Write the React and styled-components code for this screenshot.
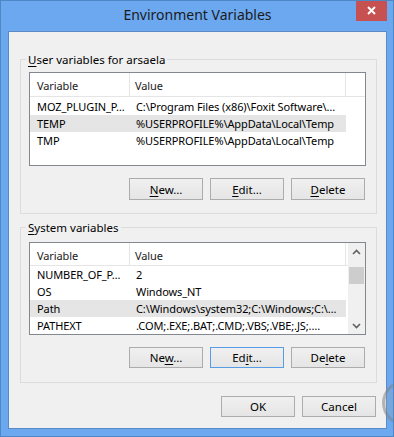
import React from "react";
import styled, { createGlobalStyle } from "styled-components";

const GlobalStyle = createGlobalStyle`
  html, body {
    margin: 0;
    padding: 0;
    background: #6ba8f0;
  }
  body {
    font-family: "Noto Sans", "Open Sans", sans-serif;
    font-size: 12px;
    color: #000;
  }
`;

const Window = styled.div`
  position: relative;
  box-sizing: border-box;
  width: 394px;
  height: 437px;
  display: flex;
  flex-direction: column;
  background: #6ba8f0;
  border: 1px solid #4f86c6;
  padding: 0 6px 7px 7px;
  overflow: hidden;
`;

const TitleBar = styled.div`
  height: 30px;
  display: grid;
  grid-template-columns: 1fr auto 1fr;
  align-items: start;
`;

const Title = styled.div`
  grid-column: 2;
  font-size: 14px;
  line-height: 28px;
  color: #1b1b1b;
  white-space: nowrap;
`;

const CloseButton = styled.div`
  grid-column: 3;
  justify-self: end;
  width: 31px;
  height: 21px;
  margin-top: -1px;
  background: #c75050;
  display: flex;
  align-items: center;
  justify-content: center;
`;

const Client = styled.div`
  flex: 1;
  display: flex;
  flex-direction: column;
  background: #f0f0f0;
  border: 1px solid #5a8bc6;
  padding: 20px 9px 0 11px;
`;

const Group = styled.fieldset`
  margin: ${({ $gap }) => $gap}px 0 0;
  padding: ${({ $top }) => $top}px 10px ${({ $bottom }) => $bottom}px 8px;
  border: 1px solid #dcdcdc;
  min-width: 0;
`;

const Legend = styled.legend`
  padding: 0 2px;
  margin-left: -3px;
  font-size: 11.5px;
  line-height: 15px;
`;

const Key = styled.span`
  text-decoration: underline;
  text-underline-offset: 2px;
`;

const ListView = styled.div`
  box-sizing: border-box;
  height: ${({ $height }) => $height}px;
  display: flex;
  background: #fff;
  border: 1px solid #828790;
  overflow: hidden;
  font-size: 11px;
  letter-spacing: -0.1px;
`;

const Columns = styled.div`
  flex: 1;
  min-width: 0;
  display: flex;
  flex-direction: column;
`;

const Header = styled.div`
  display: grid;
  grid-template-columns: 100px 216px 1fr;
  height: 23px;
  border-bottom: 1px solid #e5e5e5;
`;

const HeaderCell = styled.div`
  padding: 3px 0 0 ${({ $pad }) => $pad}px;
  line-height: 19px;
  color: #1a1a1a;
  border-right: ${({ $last }) => ($last ? "none" : "1px solid #e5e5e5")};
  white-space: nowrap;
  overflow: hidden;
`;

const Rows = styled.div`
  margin-top: ${({ $offset }) => $offset}px;
`;

const Row = styled.div`
  display: grid;
  grid-template-columns: 100px 216px;
  width: 316px;
  height: 17px;
  line-height: 17px;
  background: ${({ $selected }) => ($selected ? "#e5e5e5" : "transparent")};
`;

const Cell = styled.div`
  padding-left: ${({ $pad }) => $pad}px;
  white-space: nowrap;
  overflow: hidden;
`;

const ScrollBar = styled.div`
  width: 17px;
  display: flex;
  flex-direction: column;
  background: #f0f0f0;
`;

const ScrollArrow = styled.div`
  height: 17px;
  display: flex;
  align-items: center;
  justify-content: center;
`;

const Track = styled.div`
  flex: 1;
  padding-top: 7px;
`;

const Thumb = styled.div`
  height: 17px;
  margin: 0 1px;
  background: #cdcdcd;
`;

const ButtonRow = styled.div`
  display: flex;
  justify-content: flex-end;
  gap: 7px;
  margin-top: ${({ $gap }) => $gap}px;
  padding-right: 1px;
`;

const Button = styled.button`
  box-sizing: border-box;
  width: 74px;
  height: ${({ $height }) => $height}px;
  padding: 0;
  border: 1px solid ${({ $focused }) => ($focused ? "#569de5" : "#acacac")};
  border-radius: 0;
  background: linear-gradient(#f0f0f0, #e5e5e5);
  font-family: inherit;
  font-size: 11.5px;
  color: #000;
`;

const TouchRing = styled.div`
  position: absolute;
  left: 381px;
  top: 379px;
  width: 46px;
  height: 46px;
  box-sizing: border-box;
  border-radius: 50%;
  border: 3px solid rgba(125, 125, 125, 0.45);
  background: rgba(160, 160, 160, 0.22);
`;

const Chevron = ({ up }) => (
  <svg width="9" height="6" viewBox="0 0 9 6">
    <path
      d={up ? "M1 5 L4.5 1.5 L8 5" : "M1 1 L4.5 4.5 L8 1"}
      fill="none"
      stroke="#606060"
      strokeWidth="1.6"
    />
  </svg>
);

const userVars = [
  ["MOZ_PLUGIN_P…", "C:\\Program Files (x86)\\Foxit Software\\…"],
  ["TEMP", "%USERPROFILE%\\AppData\\Local\\Temp", true],
  ["TMP", "%USERPROFILE%\\AppData\\Local\\Temp"],
];

const systemVars = [
  ["NUMBER_OF_P…", "2"],
  ["OS", "Windows_NT"],
  ["Path", "C:\\Windows\\system32;C:\\Windows;C:\\…", true],
  ["PATHEXT", ".COM;.EXE;.BAT;.CMD;.VBS;.VBE;.JS;.…"],
];

const VarList = ({ items, height, offset, scroll }) => (
  <ListView $height={height}>
    <Columns>
      <Header>
        <HeaderCell $pad={7}>Variable</HeaderCell>
        <HeaderCell $pad={5}>Value</HeaderCell>
        <HeaderCell $last />
      </Header>
      <Rows $offset={offset}>
        {items.map(([name, value, selected]) => (
          <Row key={name} $selected={selected}>
            <Cell $pad={7}>{name}</Cell>
            <Cell $pad={6}>{value}</Cell>
          </Row>
        ))}
      </Rows>
    </Columns>
    {scroll && (
      <ScrollBar>
        <ScrollArrow>
          <Chevron up />
        </ScrollArrow>
        <Track>
          <Thumb />
        </Track>
        <ScrollArrow>
          <Chevron />
        </ScrollArrow>
      </ScrollBar>
    )}
  </ListView>
);

const App = () => {
  return (
    <>
      <GlobalStyle />
      <Window>
        <TitleBar>
          <Title>Environment Variables</Title>
          <CloseButton>
            <svg width="9" height="9" viewBox="0 0 9 9">
              <path d="M1 1 L8 8 M8 1 L1 8" stroke="#fff" strokeWidth="2" />
            </svg>
          </CloseButton>
        </TitleBar>
        <Client>
          <Group $gap={0} $top={5} $bottom={13}>
            <Legend>
              <Key>U</Key>ser variables for arsaela
            </Legend>
            <VarList items={userVars} height={94} offset={1} />
            <ButtonRow $gap={12}>
              <Button $height={22}>
                <Key>N</Key>ew…
              </Button>
              <Button $height={22}>
                <Key>E</Key>dit…
              </Button>
              <Button $height={22}>
                <Key>D</Key>elete
              </Button>
            </ButtonRow>
          </Group>
          <Group $gap={6} $top={7} $bottom={14}>
            <Legend>
              <Key>S</Key>ystem variables
            </Legend>
            <VarList items={systemVars} height={93} offset={0} scroll />
            <ButtonRow $gap={12}>
              <Button $height={21}>
                Ne<Key>w</Key>…
              </Button>
              <Button $height={21} $focused>
                Ed<Key>i</Key>t…
              </Button>
              <Button $height={21}>
                De<Key>l</Key>ete
              </Button>
            </ButtonRow>
          </Group>
          <ButtonRow $gap={13}>
            <Button $height={21}>OK</Button>
            <Button $height={21}>Cancel</Button>
          </ButtonRow>
        </Client>
        <TouchRing />
      </Window>
    </>
  );
};

export default App;
